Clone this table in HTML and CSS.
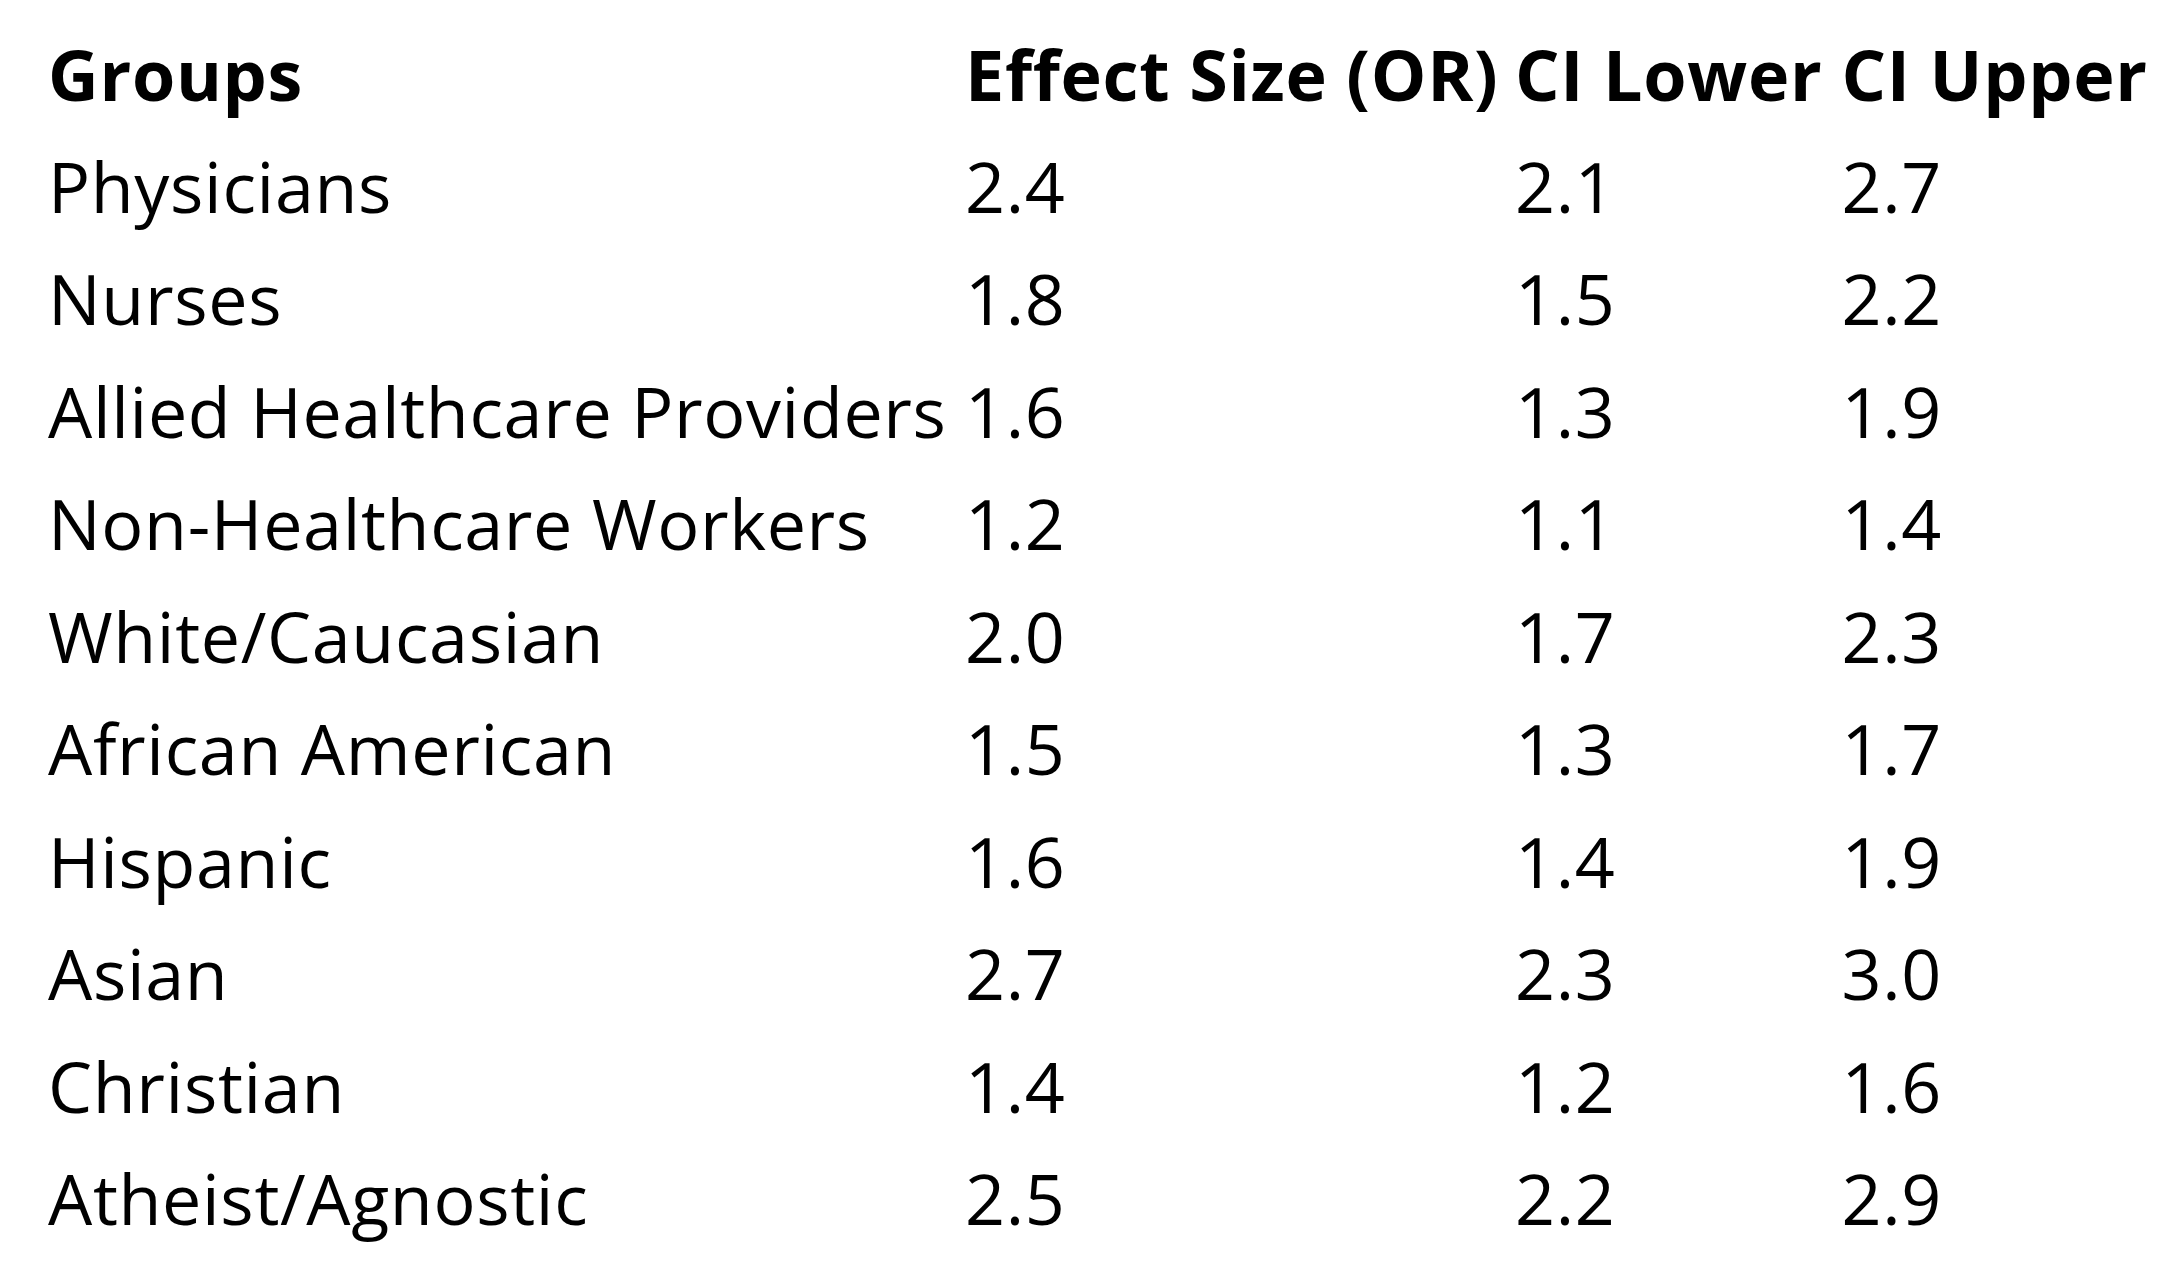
FILE: index.html
```html
<!DOCTYPE html>
<html lang="en">
<head>
<meta charset="utf-8">
<title>Effect sizes by group</title>
<link rel="stylesheet" href="styles.css">
</head>
<body>
<table class="results">
  <colgroup>
    <col class="c-group">
    <col class="c-effect">
    <col class="c-lower">
    <col class="c-upper">
  </colgroup>
  <thead>
    <tr class="head-row">
      <th>Groups</th>
      <th>Effect Size (OR)</th>
      <th>CI Lower</th>
      <th>CI Upper</th>
    </tr>
  </thead>
  <tbody>
    <tr><td>Physicians</td><td>2.4</td><td>2.1</td><td>2.7</td></tr>
    <tr><td>Nurses</td><td>1.8</td><td>1.5</td><td>2.2</td></tr>
    <tr><td>Allied Healthcare Providers</td><td>1.6</td><td>1.3</td><td>1.9</td></tr>
    <tr><td>Non-Healthcare Workers</td><td>1.2</td><td>1.1</td><td>1.4</td></tr>
    <tr><td>White/Caucasian</td><td>2.0</td><td>1.7</td><td>2.3</td></tr>
    <tr><td>African American</td><td>1.5</td><td>1.3</td><td>1.7</td></tr>
    <tr><td>Hispanic</td><td>1.6</td><td>1.4</td><td>1.9</td></tr>
    <tr><td>Asian</td><td>2.7</td><td>2.3</td><td>3.0</td></tr>
    <tr><td>Christian</td><td>1.4</td><td>1.2</td><td>1.6</td></tr>
    <tr><td>Atheist/Agnostic</td><td>2.5</td><td>2.2</td><td>2.9</td></tr>
  </tbody>
</table>
</body>
</html>
```
FILE: styles.css
```css
html, body {
  margin: 0;
  padding: 0;
  background: #ffffff;
}

body {
  padding: 18.5px 0 0 48px;
  font-family: "Open Sans", "Liberation Sans", sans-serif;
  font-size: 70px;
  color: #000000;
}

.results {
  border-collapse: collapse;
  table-layout: fixed;
  width: 2123px;
}

.c-group { width: 917px; }
.c-effect { width: 550px; }
.c-lower { width: 326.5px; }
.c-upper { width: auto; }

.results th,
.results td {
  padding: 0;
  text-align: left;
  vertical-align: top;
  white-space: nowrap;
}

.results th {
  font-weight: 700;
  line-height: 111px;
  height: 111px;
  letter-spacing: 0.7px;
}

.results td {
  font-weight: 400;
  line-height: 112.5px;
  height: 112.5px;
  letter-spacing: 0.65px;
}
```
